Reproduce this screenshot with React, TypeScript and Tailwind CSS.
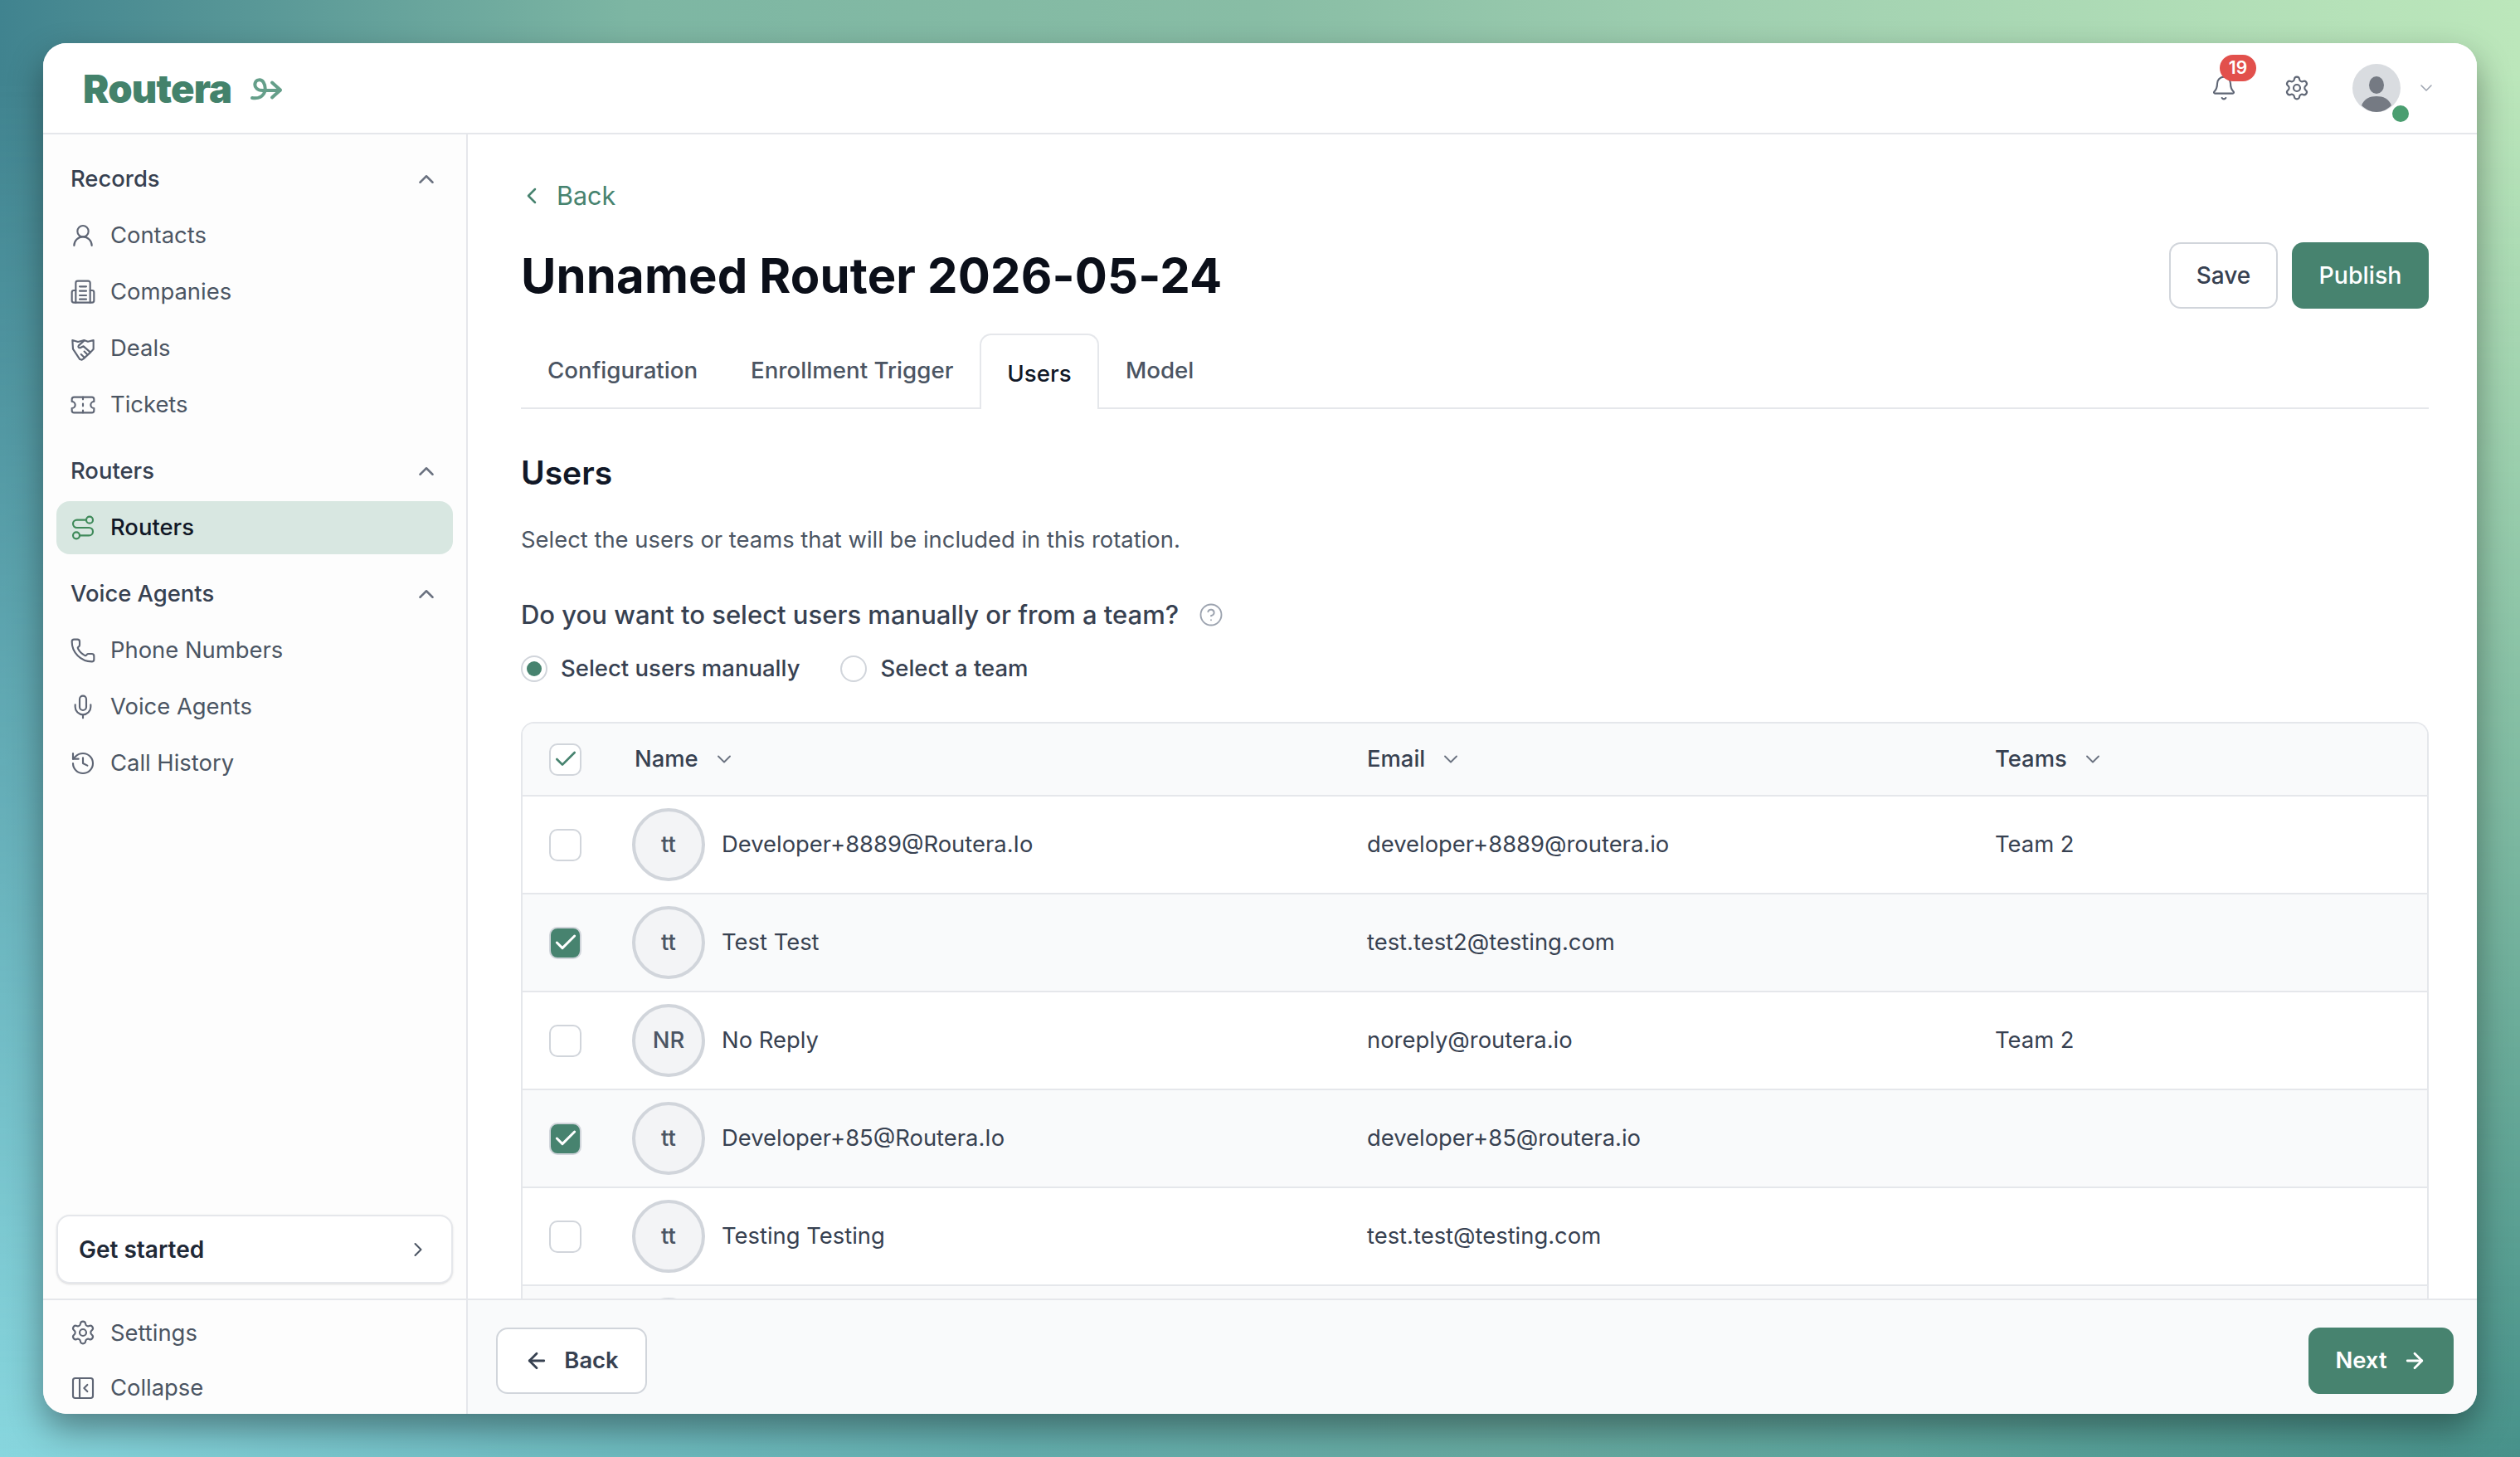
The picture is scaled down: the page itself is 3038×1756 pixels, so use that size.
import {
  ArrowLeft,
  ArrowRight,
  Bell,
  Check,
  ChevronDown,
  ChevronLeft,
  ChevronRight,
  ChevronUp,
  CircleHelp,
  History,
  Mic,
  PanelLeftClose,
  Phone,
  Route,
  Settings,
  UserRound,
} from 'lucide-react';
import type { SVGProps } from 'react';

type IconProps = SVGProps<SVGSVGElement> & { strokeWidth?: number };

function CompanyIcon(props: IconProps) {
  return (
    <svg viewBox="0 0 24 24" fill="none" stroke="currentColor" strokeLinecap="round" strokeLinejoin="round" {...props}>
      <path d="M5.500 21.500V3.800a1.800 1.800 0 0 1 1.800-1.800h9.400a1.800 1.800 0 0 1 1.800 1.800v17.700" />
      <path d="M5.500 10.500H3.800A1.800 1.800 0 0 0 2 12.300v7.400a1.800 1.800 0 0 0 1.800 1.800h16.400a1.800 1.800 0 0 0 1.800-1.800v-7.400a1.800 1.800 0 0 0-1.800-1.800h-1.700" />
      <path d="M9 7h6M9 11h6M9 15h6M9 18.500h6" />
    </svg>
  );
}

function DealIcon(props: IconProps) {
  return (
    <svg viewBox="0 0 24 24" fill="none" stroke="currentColor" strokeLinecap="round" strokeLinejoin="round" {...props}>
      <path d="M2.500 4.500l5 1.500 3-.8 2.500-.7 3.500 1.300 5-1.300v8l-2.500 2.800-6.500 6-1.500 1-1.800-.5L3 12.500z" />
      <path d="M13 5L8.200 9.300c-.9 1-.1 2.400 1.200 2.100l3.100-1.400 6 5.300" />
      <path d="M15.800 17.200l-2.600-2.500M12.800 19.700l-2.500-2.400" />
    </svg>
  );
}

function TicketIcon(props: IconProps) {
  return (
    <svg viewBox="0 0 24 24" fill="none" stroke="currentColor" strokeLinecap="round" strokeLinejoin="round" {...props}>
      <path d="M2 9a3 3 0 0 1 0 6v2a2 2 0 0 0 2 2h16a2 2 0 0 0 2-2v-2a3 3 0 0 1 0-6V7a2 2 0 0 0-2-2H4a2 2 0 0 0-2 2Z" />
      <path d="M12 5v2M12 11v2M12 17v2" />
    </svg>
  );
}

const SECTIONS = [
  {
    title: 'Records',
    items: [
      { icon: UserRound, label: 'Contacts' },
      { icon: CompanyIcon, label: 'Companies' },
      { icon: DealIcon, label: 'Deals' },
      { icon: TicketIcon, label: 'Tickets' },
    ],
  },
  {
    title: 'Routers',
    items: [{ icon: Route, label: 'Routers', active: true }],
  },
  {
    title: 'Voice Agents',
    items: [
      { icon: Phone, label: 'Phone Numbers' },
      { icon: Mic, label: 'Voice Agents' },
      { icon: History, label: 'Call History' },
    ],
  },
];

const USERS = [
  { initials: 'tt', name: 'Developer+8889@Routera.Io', email: 'developer+8889@routera.io', team: 'Team 2', checked: false },
  { initials: 'tt', name: 'Test Test', email: 'test.test2@testing.com', team: '', checked: true },
  { initials: 'NR', name: 'No Reply', email: 'noreply@routera.io', team: 'Team 2', checked: false },
  { initials: 'tt', name: 'Developer+85@Routera.Io', email: 'developer+85@routera.io', team: '', checked: true },
  { initials: 'tt', name: 'Testing Testing', email: 'test.test@testing.com', team: '', checked: false },
  { initials: '', name: '', email: '', team: '', checked: false },
];

function Logo() {
  return (
    <div className="flex items-center gap-[23px]">
      <span className="text-[47px] font-black leading-none tracking-[-0.8px] text-[#43826b]">Routera</span>
      <svg viewBox="0 0 39 27" className="mt-[3px] h-[27px] w-[39px]" fill="none" stroke="#659f8a" strokeWidth="4" strokeLinecap="round" strokeLinejoin="round">
        <path d="M2 24c6 1 11-.5 14-5 2.500-4 2-10-.5-14-2.500-4-9-3.500-10 1.500-1 5 3 8.500 9 8.500h21" />
        <path d="M26 5.500l10 9-10 9" />
      </svg>
    </div>
  );
}

function SidebarRow({ icon: Icon, label, active }: { icon: (p: IconProps) => React.ReactNode; label: string; active?: boolean }) {
  return (
    <div
      className={`flex h-[64px] items-center gap-[17px] rounded-[16px] pl-[16px] text-[27.400px] ${
        active ? 'bg-[#d8e7e1] font-medium text-[#111827]' : 'text-[#4b5563]'
      }`}
    >
      <Icon className={`h-[32px] w-[32px] ${active ? 'text-[#3f8a5a]' : 'text-[#5f6675]'}`} strokeWidth={1.6} />
      {label}
    </div>
  );
}

function Sidebar() {
  return (
    <aside className="flex w-[512px] flex-col overflow-hidden border-r-2 border-[#e5e7eb] bg-[#fdfdfd]">
      <nav className="flex-1 px-[16px] pt-[20px]">
        {SECTIONS.map((section) => (
          <div key={section.title} className="mb-[14px]">
            <div className="flex h-[68px] items-center justify-between px-[17px] text-[27.400px] font-medium text-[#374151]">
              {section.title}
              <ChevronUp className="h-[30px] w-[30px] text-[#6b7280]" strokeWidth={2} />
            </div>
            <div className="mt-[2px] flex flex-col gap-[4px]">
              {section.items.map((item) => (
                <SidebarRow key={item.label} {...item} />
              ))}
            </div>
          </div>
        ))}
      </nav>
      <div className="mx-[16px] mb-[18px] flex h-[83px] items-center justify-between rounded-[16px] border-2 border-[#e5e7eb] bg-white pl-[25px] pr-[26px] text-[28px] font-semibold text-[#1f2937] shadow-sm">
        Get started
        <ChevronRight className="h-[28px] w-[28px] text-[#4b5563]" strokeWidth={1.75} />
      </div>
      <div className="flex h-[139px] flex-col gap-[4px] border-t-2 border-[#e5e7eb] px-[16px] pt-[8px]">
        <SidebarRow icon={Settings} label="Settings" />
        <SidebarRow icon={PanelLeftClose} label="Collapse" />
      </div>
    </aside>
  );
}

function Checkbox({ checked, header }: { checked?: boolean; header?: boolean }) {
  if (checked) {
    return (
      <span className="flex h-[39px] w-[39px] items-center justify-center rounded-[10px] border-2 border-[#d1d5db] bg-[#47836f]">
        <Check className="h-[32px] w-[32px] text-white" strokeWidth={2.25} />
      </span>
    );
  }
  return (
    <span className="flex h-[39px] w-[39px] items-center justify-center rounded-[10px] border-2 border-[#d1d5db] bg-white">
      {header && <Check className="h-[32px] w-[32px] text-[#47836f]" strokeWidth={2} />}
    </span>
  );
}

function HeaderCell({ label }: { label: string }) {
  return (
    <div className="flex items-center gap-[17px]">
      {label}
      <ChevronDown className="h-[28px] w-[28px] text-[#6b7280]" strokeWidth={1.6} />
    </div>
  );
}

function UsersTable() {
  return (
    <div className="mt-[44px] rounded-t-[16px] border-2 border-b-0 border-[#e5e7eb] text-[27.400px] text-[#374151]">
      <div className="grid h-[86px] grid-cols-[132px_886px_757px_1fr] items-center rounded-t-[14px] bg-[#f9fafb] font-medium">
        <div className="pl-[32px]">
          <Checkbox header />
        </div>
        <div className="pl-[3px]">
          <HeaderCell label="Name" />
        </div>
        <HeaderCell label="Email" />
        <HeaderCell label="Teams" />
      </div>
      {USERS.map((user, i) => (
        <div
          key={user.email || i}
          className={`grid h-[118px] grid-cols-[132px_886px_757px_1fr] items-center border-t-2 border-[#e5e7eb] ${
            i % 2 === 1 ? 'bg-[#f9fafb]' : 'bg-white'
          }`}
        >
          <div className="pl-[32px]">
            <Checkbox checked={user.checked} />
          </div>
          <div className="flex items-center gap-[20px]">
            <span className="flex h-[88px] w-[88px] items-center justify-center rounded-full border-[4px] border-[#d1d5db] bg-[#f3f4f6] font-medium text-[#4b5563]">
              {user.initials}
            </span>
            {user.name}
          </div>
          <div>{user.email}</div>
          <div>{user.team}</div>
        </div>
      ))}
    </div>
  );
}

function Content() {
  return (
    <div className="h-[1403px] overflow-hidden pl-[64px] pr-[58px] pt-[54px]">
      <div className="flex h-[40px] items-center gap-[14px] text-[30.500px] text-[#47836f]">
        <ChevronLeft className="-ml-[3px] h-[32px] w-[32px]" strokeWidth={1.9} />
        Back
      </div>
      <div className="mt-[36px] flex h-[80px] items-center justify-between">
        <h1 className="text-[58px] font-bold tracking-[0.15px] text-[#0b0f19]">Unnamed Router 2026-05-24</h1>
        <div className="flex gap-[17px]">
          <button className="h-[80px] w-[131px] rounded-[14px] border-2 border-[#d1d5db] bg-white text-[28px] font-medium text-[#374151]">
            Save
          </button>
          <button className="h-[80px] w-[165px] rounded-[14px] bg-[#47836f] text-[28.500px] font-medium text-white">
            Publish
          </button>
        </div>
      </div>
      <div className="mt-[30px] flex h-[91px] border-b-2 border-[#e5e7eb] text-[27.700px] font-medium text-[#4b5563]">
        <div className="flex w-[277px] items-center pl-[32px]">Configuration</div>
        <div className="flex w-[276px] items-center">Enrollment Trigger</div>
        <div className="-mb-[2px] flex h-[91px] w-[144px] items-center justify-center rounded-t-[14px] border-2 border-b-0 border-[#e5e7eb] bg-white pt-[4px] text-[#111827]">
          Users
        </div>
        <div className="flex items-center pl-[32px]">Model</div>
      </div>
      <h2 className="mt-[53px] text-[39px] font-semibold leading-[48px] text-[#111827]">Users</h2>
      <p className="mt-[36px] text-[27.400px] leading-[40px] text-[#4b5563]">
        Select the users or teams that will be included in this rotation.
      </p>
      <div className="mt-[47px] flex h-[48px] items-center gap-[24px] text-[31px] font-medium text-[#374151]">
        Do you want to select users manually or from a team?
        <CircleHelp className="h-[30px] w-[30px] text-[#9ca3af]" strokeWidth={1.5} />
      </div>
      <div className="mt-[21px] flex h-[40px] items-center text-[27.500px] font-medium text-[#374151]">
        <span className="flex h-[32px] w-[32px] items-center justify-center rounded-full border-2 border-[#d1d5db]">
          <span className="h-[18px] w-[18px] rounded-full bg-[#47836f]" />
        </span>
        <span className="ml-[16px]">Select users manually</span>
        <span className="ml-[49px] h-[32px] w-[32px] rounded-full border-2 border-[#d1d5db]" />
        <span className="ml-[16px]">Select a team</span>
      </div>
      <UsersTable />
    </div>
  );
}

function Footer() {
  return (
    <div className="flex h-[139px] items-start justify-between border-t-2 border-[#e5e7eb] bg-[#f9fafb] pl-[34px] pr-[28px] pt-[33px]">
      <button className="flex h-[80px] w-[182px] items-center justify-center gap-[18px] rounded-[14px] border-2 border-[#d1d5db] bg-white text-[27.400px] font-semibold text-[#374151]">
        <ArrowLeft className="h-[30px] w-[30px]" strokeWidth={2.25} />
        Back
      </button>
      <button className="flex h-[80px] w-[175px] items-center justify-center gap-[18px] rounded-[14px] bg-[#47836f] text-[27.400px] font-semibold text-white">
        Next
        <ArrowRight className="h-[30px] w-[30px]" strokeWidth={2.25} />
      </button>
    </div>
  );
}

function TopBar() {
  return (
    <header className="flex h-[110px] items-center justify-between border-b-2 border-[#e5e7eb] bg-white pl-[48px] pr-[49px]">
      <Logo />
      <div className="flex items-center">
        <div className="relative">
          <Bell className="h-[32px] w-[32px] text-[#5f6675]" strokeWidth={1.6} />
          <span className="absolute -top-[24px] left-[11px] flex h-[32px] w-[44px] items-center justify-center rounded-full bg-[#e2504c] text-[21px] font-semibold text-white">
            19
          </span>
        </div>
        <Settings className="ml-[56px] h-[32px] w-[32px] text-[#5f6675]" strokeWidth={1.6} />
        <div className="relative ml-[51px] h-[58px] w-[58px]">
          <svg viewBox="0 0 58 58" className="h-[58px] w-[58px]">
            <circle cx="29" cy="29" r="29" fill="#d9dce0" />
            <ellipse cx="29" cy="25.500" rx="9" ry="10.500" fill="#757a83" />
            <path d="M11 50c3-8 10-11 18-11s15 3 18 11c-5 5-11 8-18 8s-13-3-18-8z" fill="#757a83" />
          </svg>
          <span className="absolute -bottom-[12px] -right-[10px] h-[20px] w-[20px] rounded-full bg-[#4a9e70]" />
        </div>
        <ChevronDown className="ml-[19px] h-[24px] w-[24px] text-[#9ca3af]" strokeWidth={1.5} />
      </div>
    </header>
  );
}

export default function App() {
  return (
    <div className="relative flex h-[1756px] w-[3038px] bg-[linear-gradient(90deg,#40838f_0%,#7db6a3_25%,#88bda5_50%,#9fcfb0_68%,#bce7bb_100%)] p-[52px] [font-family:Inter,sans-serif] before:absolute before:inset-0 before:bg-[linear-gradient(90deg,#88d6de_0%,#71bec4_20%,#63aeae_40%,#66a9a0_60%,#5da79f_75%,#47918a_100%)] before:[mask-image:linear-gradient(to_bottom,transparent_5%,black_100%)]">
      <div className="relative flex h-[1652px] w-[2934px] flex-col overflow-hidden rounded-[28px] bg-white shadow-[0_18px_40px_rgba(0,0,0,0.38)]">
        <TopBar />
        <div className="flex h-[1542px]">
          <Sidebar />
          <main className="flex-1">
            <Content />
            <Footer />
          </main>
        </div>
      </div>
    </div>
  );
}
